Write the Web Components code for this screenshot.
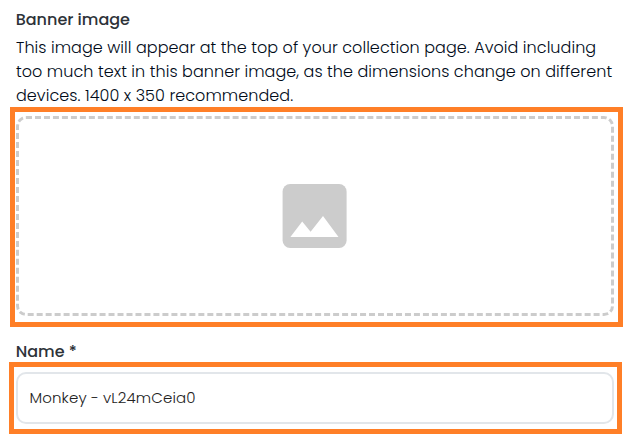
<!DOCTYPE html>
<html lang="en"><head><meta charset="utf-8"><title>Collection settings</title>
<style>
body{margin:0;background:#fff;font-family:Poppins,Inter,"Open Sans",sans-serif;color:#000a18}
</style></head><body>
<collection-form></collection-form>
<script>
class TextLine extends HTMLElement{
  constructor(){super();this.attachShadow({mode:'open'}).innerHTML='<style>:host{display:block;height:24px;line-height:24px;white-space:nowrap}</style><slot></slot>';}
}
class HighlightFrame extends HTMLElement{
  constructor(){super();this.attachShadow({mode:'open'}).innerHTML='<style>:host{display:block;box-sizing:border-box;width:613px;border:5px solid #ff7f27}</style><slot></slot>';}
}
class ImageDrop extends HTMLElement{
  constructor(){super();this.attachShadow({mode:'open'}).innerHTML=`<style>
  :host{display:flex;align-items:center;justify-content:center;box-sizing:border-box;width:598px;height:200px;border:3px dashed #ccc;border-radius:10px}
  svg{display:block;margin-right:2px}</style>
  <svg width="65" height="64" viewBox="0 0 65 64"><rect x=".6" width="64" height="64" rx="7.5" fill="#ccc"/><path d="M8.4 53 20.2 37.5 28.6 47.8 41 32 56.5 53Z" fill="#fff"/></svg>`;}
}
class TextField extends HTMLElement{
  constructor(){super();this.attachShadow({mode:'open'}).innerHTML=`<style>
  :host{display:flex;align-items:center;box-sizing:border-box;width:598px;height:52px;padding:0 11.5px;border:2px solid #e2e6ea;border-radius:10px;font-size:15px;letter-spacing:.12px;font-weight:300;color:#222}</style><slot></slot>`;}
}
class CollectionForm extends HTMLElement{
  constructor(){super();this.attachShadow({mode:'open'}).innerHTML=`<style>
  :host{display:flow-root;width:635px;height:441px;overflow:hidden}
  .label{font-size:16px;font-weight:500;color:#2d3238;margin-left:15.7px}
  .banner{margin-top:8px}
  .copy{margin:4px 0 0 16px;font-size:16px;font-weight:300;letter-spacing:.06px}
  .drop{margin:-1px 0 0 10px;height:220px;padding:4px 0 0 1px;}
  .name{margin-top:13px}
  .field{margin:-2px 0 0 9px;height:72px;padding:5px 0 0 2px}
  </style>
  <text-line class="label banner">Banner image</text-line>
  <div class="copy">
  <text-line>This image will appear at the top of your collection page. Avoid including</text-line>
  <text-line>too much text in this banner image, as the dimensions change on different</text-line>
  <text-line>devices. 1400 x 350 recommended.</text-line>
  </div>
  <highlight-frame class="drop"><image-drop></image-drop></highlight-frame>
  <text-line class="label name">Name *</text-line>
  <highlight-frame class="field"><text-field><text-line>Monkey - vL24mCeia0</text-line></text-field></highlight-frame>`;}
}
customElements.define('text-line',TextLine);
customElements.define('highlight-frame',HighlightFrame);
customElements.define('image-drop',ImageDrop);
customElements.define('text-field',TextField);
customElements.define('collection-form',CollectionForm);
</script></body></html>
